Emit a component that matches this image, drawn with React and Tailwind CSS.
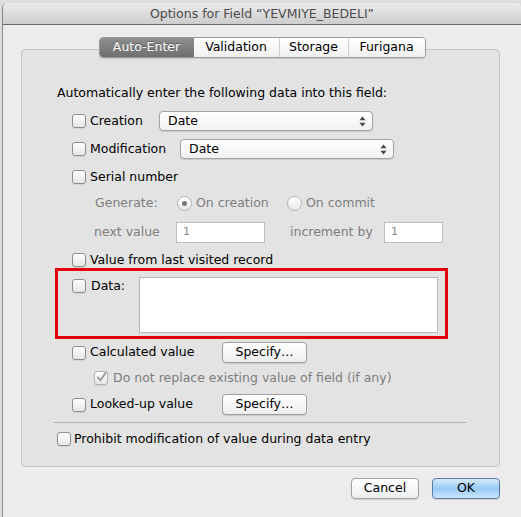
import React from 'react'

const font = { fontFamily: '"DejaVu Sans", "Noto Sans", sans-serif' }

function Check({ checked, disabled }) {
  return (
    <span
      className={
        'flex h-[14px] w-[14px] shrink-0 items-center justify-center rounded-[3px] border bg-linear-to-b from-white to-[#e6e6e6] shadow-[0_1px_1px_rgba(0,0,0,0.08)] ' +
        (disabled ? 'border-[#b3b3b3]' : 'border-[#8e8e8e]')
      }
    >
      {checked && (
        <svg width="12" height="12" viewBox="0 0 12 12" className="-mt-[2px] ml-[1px]">
          <path d="M2 6.5 L4.8 9.5 L10.5 1.5" fill="none" stroke={disabled ? '#9a9a9a' : '#333'} strokeWidth="2" strokeLinecap="round" strokeLinejoin="round" />
        </svg>
      )}
    </span>
  )
}

function Radio({ on }) {
  return (
    <span className="flex h-[15px] w-[15px] shrink-0 items-center justify-center rounded-full border border-[#b5b5b5] bg-linear-to-b from-white to-[#e8e8e8]">
      {on && <span className="h-[5px] w-[5px] rounded-full bg-[#777]" />}
    </span>
  )
}

function Select({ width }) {
  return (
    <div
      className="flex h-[20px] items-center justify-between rounded-[4px] border border-[#a3a3a3] bg-linear-to-b from-white to-[#f1f1f1] pl-[8px] pr-[6px] shadow-[0_1px_1px_rgba(0,0,0,0.12)]"
      style={{ width }}
    >
      <span>Date</span>
      <svg width="7" height="11" viewBox="0 0 7 11">
        <path d="M3.5 0.5 L6.5 4.2 L0.5 4.2 Z" fill="#444" />
        <path d="M3.5 10.5 L6.5 6.8 L0.5 6.8 Z" fill="#444" />
      </svg>
    </div>
  )
}

function Button({ children, width, primary }) {
  return (
    <div
      className={
        'flex h-[21px] items-center justify-center rounded-[4px] border shadow-[0_1px_1px_rgba(0,0,0,0.12)] ' +
        (primary
          ? 'border-[#5d79a8] bg-linear-to-b from-[#d7ebfc] via-[#98cbf6] to-[#cbe6fd]'
          : 'border-[#a0a0a0] bg-linear-to-b from-white to-[#eeeeee]')
      }
      style={{ width }}
    >
      {children}
    </div>
  )
}

function Field({ width }) {
  return (
    <div
      className="flex h-[21px] items-center border border-[#bdbdbd] bg-white pl-[6px] text-[11px] text-[#8a8a8a]"
      style={{ width }}
    >
      1
    </div>
  )
}

export default function App() {
  return (
    <div className="h-[517px] w-[521px] overflow-hidden bg-[#dcdcdc] text-[12.5px] text-black" style={font}>
      <div className="ml-[2px] mt-[3px] h-[514px] rounded-t-[5px] border-l border-[#8a8a8a] bg-[#ececec]">
        <div className="flex h-[22px] items-center justify-center rounded-t-[5px] border-b border-[#676767] bg-linear-to-b from-[#ebebeb] to-[#cdcdcd] pt-[2px] text-[#4b4b4b]">
          Options for Field “YEVMIYE_BEDELI”
        </div>

        <div className="relative z-10 mx-auto mb-[-9px] mt-[12px] flex h-[21px] w-[327px] overflow-hidden rounded-[4px] border border-[#9b9b9b] shadow-[0_1px_1px_rgba(0,0,0,0.12)]">
          <div className="flex w-[94px] items-center justify-center bg-linear-to-b from-[#8f8f8f] to-[#6f6f6f] text-white [text-shadow:0_-1px_0_rgba(0,0,0,0.35)]">
            Auto-Enter
          </div>
          <div className="flex w-[85px] items-center justify-center bg-linear-to-b from-white to-[#f0f0f0]">Validation</div>
          <div className="flex w-[69px] items-center justify-center border-l border-[#cfcfcf] bg-linear-to-b from-white to-[#f0f0f0]">Storage</div>
          <div className="flex flex-1 items-center justify-center border-l border-[#cfcfcf] bg-linear-to-b from-white to-[#f0f0f0]">Furigana</div>
        </div>

        <div className="ml-[18px] w-[479px] rounded-[4px] border border-[#c5c5c5] bg-[#e3e3e3] pb-[17px] pl-[35px] pt-[35px]">
          <div className="h-[16px] leading-[16px]">Automatically enter the following data into this field:</div>

          <div className="ml-[15px] mt-[10px] flex h-[20px] items-center">
            <Check />
            <span className="ml-[4px] w-[69px]">Creation</span>
            <Select width={214} />
          </div>

          <div className="ml-[15px] mt-[8px] flex h-[20px] items-center">
            <Check />
            <span className="ml-[4px] w-[90px]">Modification</span>
            <Select width={214} />
          </div>

          <div className="ml-[15px] mt-[8px] flex h-[20px] items-center">
            <Check />
            <span className="ml-[4px]">Serial number</span>
          </div>

          <div className="ml-[38px] mt-[6px] flex h-[20px] items-center text-[#7d7d7d]">
            <span className="w-[82px]">Generate:</span>
            <Radio on />
            <span className="ml-[4px] w-[91px]">On creation</span>
            <Radio />
            <span className="ml-[4px]">On commit</span>
          </div>

          <div className="ml-[37px] mt-[9px] flex h-[21px] items-center text-[#7d7d7d]">
            <span className="w-[82px]">next value</span>
            <Field width={89} />
            <span className="ml-[25px] w-[94px]">increment by</span>
            <Field width={59} />
          </div>

          <div className="ml-[15px] mt-[9px] flex h-[16px] items-center">
            <Check />
            <span className="ml-[4px]">Value from last visited record</span>
          </div>

          <div className="-ml-[2px] flex h-[71px] w-[393px] border-[3px] border-[#e6000c] pl-[14px] pt-[6px]">
            <div className="mt-[1px] flex h-[16px] items-center">
              <Check />
              <span className="ml-[5px] w-[48px]">Data:</span>
            </div>
            <div className="h-[56px] w-[299px] border border-[#b8b8b8] bg-white" />
          </div>

          <div className="ml-[15px] mt-[3px] flex h-[21px] items-center">
            <Check />
            <span className="ml-[4px] w-[132px]">Calculated value</span>
            <Button width={85}>Specify…</Button>
          </div>

          <div className="ml-[37px] mt-[5px] flex h-[20px] items-center text-[#7d7d7d]">
            <Check checked disabled />
            <span className="ml-[5px]">Do not replace existing value of field (if any)</span>
          </div>

          <div className="ml-[15px] mt-[6px] flex h-[21px] items-center">
            <Check />
            <span className="ml-[4px] w-[132px]">Looked-up value</span>
            <Button width={85}>Specify…</Button>
          </div>

          <div className="-ml-[3px] mt-[7px] h-px w-[412px] bg-[#b2b2b2]" />

          <div className="mt-[6px] flex h-[20px] items-center">
            <Check />
            <span className="ml-[3px]">Prohibit modification of value during data entry</span>
          </div>
        </div>

        <div className="mt-[11px] flex justify-end gap-[13px] pr-[21px]">
          <Button width={68}>Cancel</Button>
          <Button width={68} primary>OK</Button>
        </div>
      </div>
    </div>
  )
}
